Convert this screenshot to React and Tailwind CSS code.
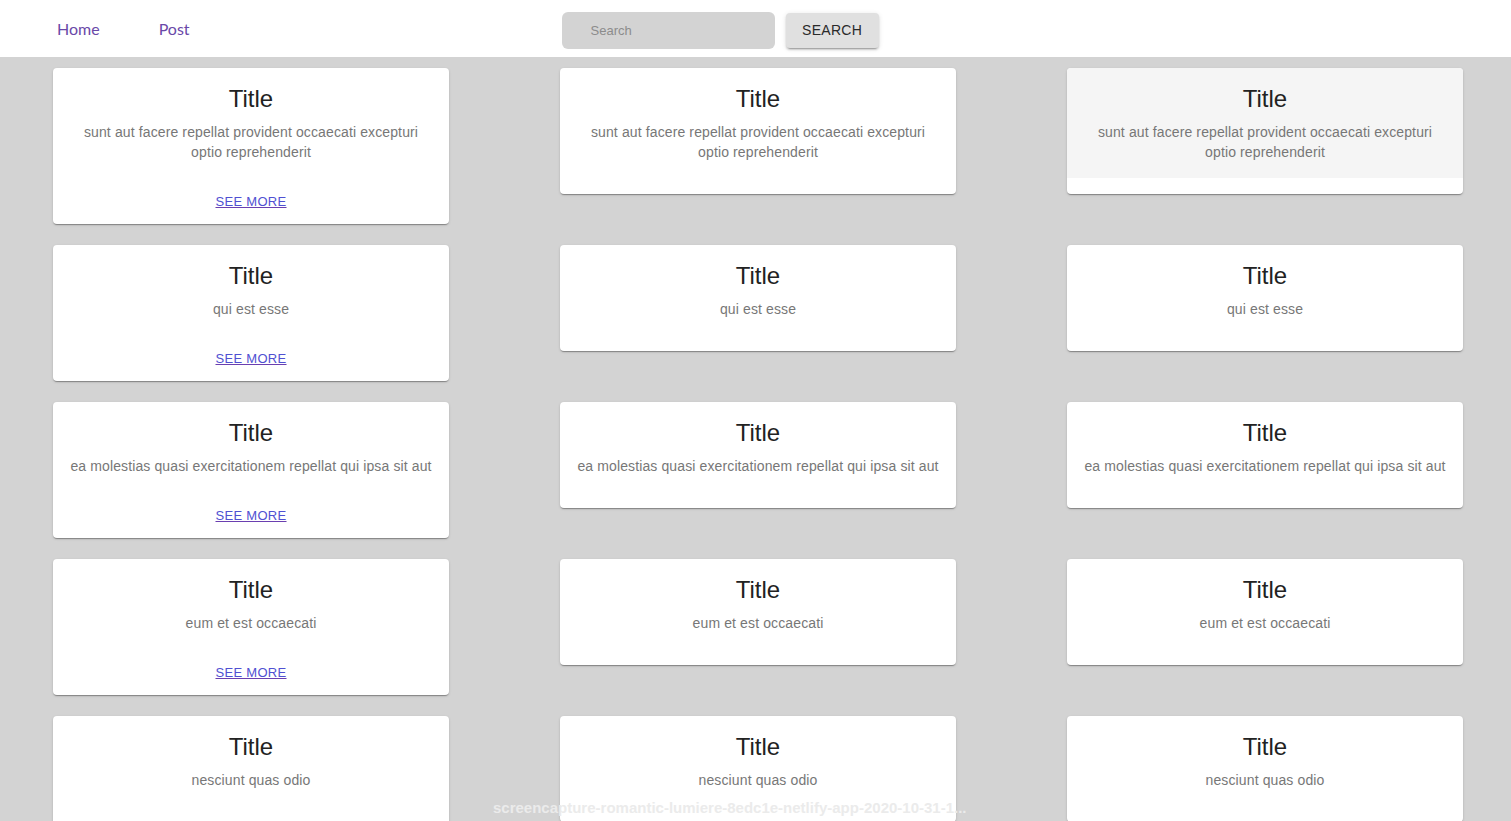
import React from "react";

const rows = [
  "sunt aut facere repellat provident occaecati excepturi optio reprehenderit",
  "qui est esse",
  "ea molestias quasi exercitationem repellat qui ipsa sit aut",
  "eum et est occaecati",
  "nesciunt quas odio",
];

function Card({ body, seeMore, hovered }) {
  return (
    <div className="bg-white rounded-[4px] shadow-[0_2px_1px_-1px_rgba(0,0,0,0.2),0_1px_1px_0_rgba(0,0,0,0.14),0_1px_3px_0_rgba(0,0,0,0.12)] overflow-hidden">
      <div className={`px-4 pt-4 pb-4 text-center ${hovered ? "bg-[#f5f5f5]" : ""}`}>
        <div className="text-[24px] leading-[30px] text-[#222] font-['Liberation_Sans',Arial,sans-serif]">Title</div>
        <div className="mt-[8px] text-[14px] leading-[20px] tracking-[0.12px] text-[#777] font-['Liberation_Sans',Arial,sans-serif]">
          {body}
        </div>
      </div>
      {seeMore ? (
        <div className="h-[46px] flex items-center justify-center pt-[1px]">
          <a
            href="#"
            className="text-[13px] leading-[20px] tracking-[0.3px] text-[#5050d2] underline decoration-[#6a3fb0] uppercase font-['Liberation_Sans',Arial,sans-serif]"
          >
            SEE MORE
          </a>
        </div>
      ) : (
        <div className="h-[16px]" />
      )}
    </div>
  );
}

export default function App() {
  return (
    <div className="relative min-h-screen bg-[#d3d3d3]">
      <header className="h-[57px] bg-white flex items-center">
        <a href="#" className="ml-[57px] text-[16px] text-[#6a48a8] font-['Lato',sans-serif] leading-none">
          Home
        </a>
        <a href="#" className="ml-[59px] text-[16px] text-[#6a48a8] font-['Lato',sans-serif] leading-none">
          Post
        </a>
        <div className="ml-[372px] flex items-center">
          <div className="w-[213px] h-[37px] mt-[4px] rounded-[6px] bg-[#d3d3d3] flex items-center pl-[29px]">
            <span className="text-[13px] text-[#8c8c8c] font-['Liberation_Sans',Arial,sans-serif]">Search</span>
          </div>
          <button className="ml-[11px] mt-[4px] w-[93px] h-[35px] rounded-[4px] bg-[#e0e0e0] shadow-[0_3px_1px_-2px_rgba(0,0,0,0.2),0_2px_2px_0_rgba(0,0,0,0.14),0_1px_5px_0_rgba(0,0,0,0.12)] text-[14px] tracking-[0.3px] text-[#2a2a2a] font-['Liberation_Sans',Arial,sans-serif]">
            SEARCH
          </button>
        </div>
      </header>
      <main className="pt-[11px] pl-[53px] pb-6">
        <div className="grid grid-cols-[396px_396px_396px] gap-x-[111px] gap-y-[21px] items-start">
          {rows.map((body, i) => (
            <React.Fragment key={i}>
              <Card body={body} seeMore />
              <Card body={body} />
              <Card body={body} hovered={i === 0} />
            </React.Fragment>
          ))}
        </div>
      </main>
      <div className="absolute z-10 top-[797px] left-[493px] text-[15px] font-bold text-[#ebebeb] font-['Liberation_Sans',Arial,sans-serif] whitespace-nowrap pointer-events-none">
        screencapture-romantic-lumiere-8edc1e-netlify-app-2020-10-31-1...
      </div>
    </div>
  );
}
